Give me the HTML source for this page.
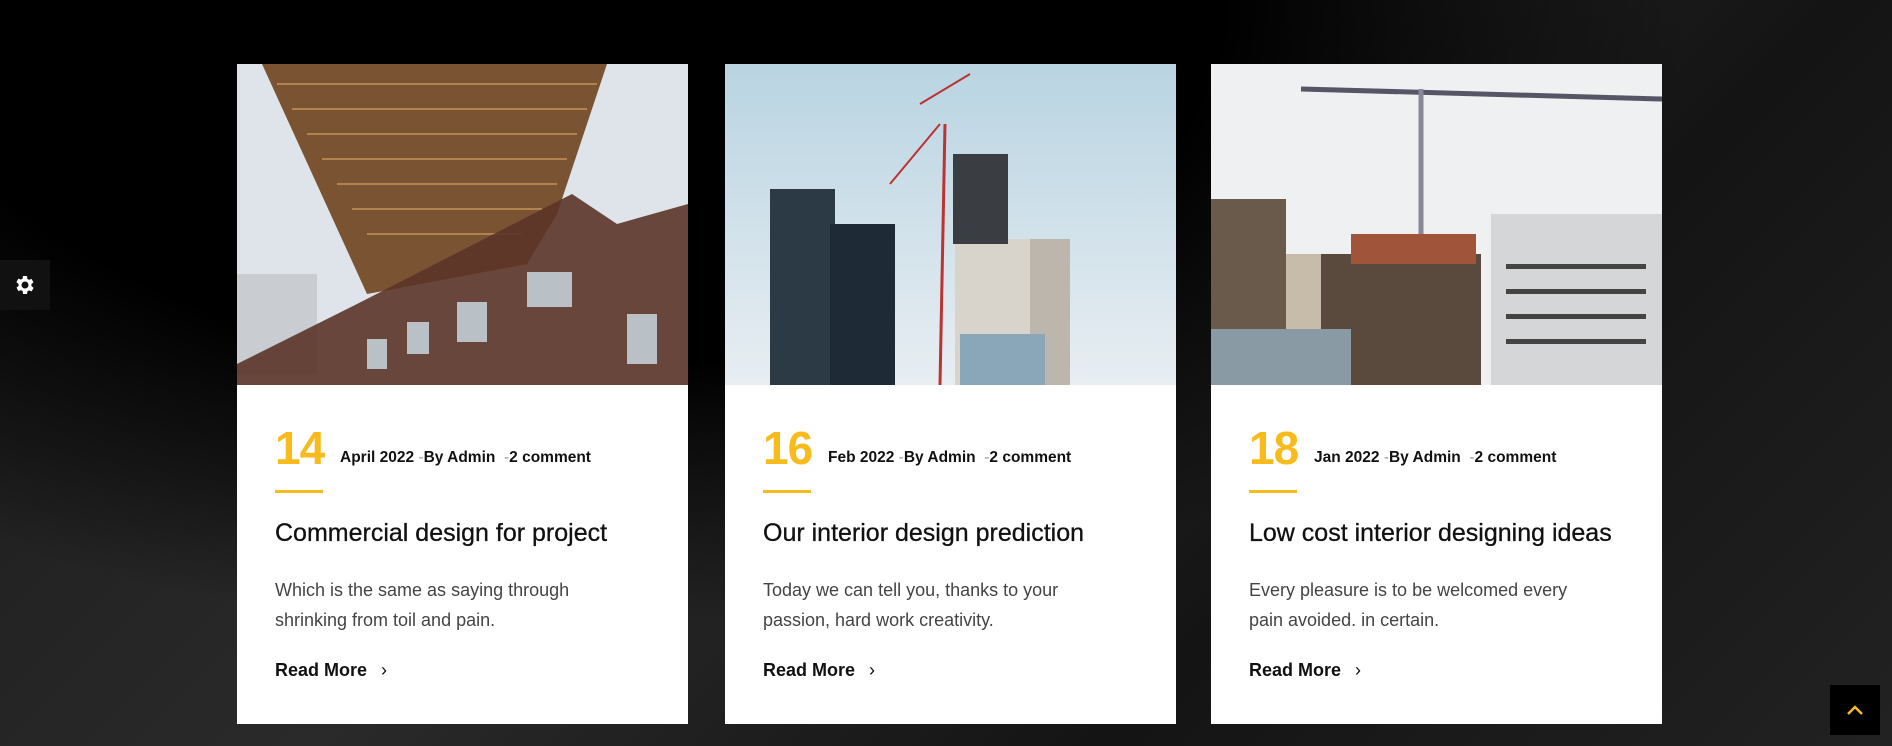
<!DOCTYPE html>
<html><head><meta charset="utf-8"><style>
*{margin:0;padding:0;box-sizing:border-box}
body{width:1892px;height:746px;overflow:hidden;position:relative;font-family:"Liberation Sans",sans-serif;
background:radial-gradient(ellipse at 30% 0%,#000 0 35%,transparent 60%),linear-gradient(135deg,#1a1a1a 0%,#2a2a2a 40%,#141414 70%,#222 100%);}
.bgtop{position:absolute;left:0;top:0;width:820px;height:200px;background:#000}
.card{position:absolute;top:64px;width:451px;height:660px;background:#fff}
.img{height:321px;overflow:hidden}
.img svg{display:block}
.body{padding:0 0 0 38px;position:relative}
.num{position:absolute;left:38px;top:36px;font-size:46px;font-weight:bold;color:#f8bb1e;letter-spacing:-1px}
.meta{position:absolute;left:103px;top:64px;font-size:15.5px;font-weight:bold;color:#111;white-space:nowrap}
.meta span{color:#999;font-weight:normal}
.bar{position:absolute;left:38px;top:105px;width:48px;height:3px;background:#f8bb1e}
.title{position:absolute;left:38px;top:134px;font-size:25px;color:#111;white-space:nowrap;-webkit-text-stroke:.3px #111}
.para{position:absolute;left:38px;top:190px;font-size:18px;line-height:30px;color:#444;width:335px}
.more{position:absolute;left:38px;top:275px;font-size:18px;font-weight:bold;color:#111}
.more b{display:inline-block;margin-left:14px;font-weight:normal}
</style></head><body>
<div class="bgtop"></div>
<div style="position:absolute;left:0;top:260px;width:50px;height:50px;background:#111;display:flex;align-items:center;justify-content:center">
<svg width="24" height="24" viewBox="0 0 24 24"><path fill="#fff" d="M19.4 13a7.5 7.5 0 0 0 0-2l2.1-1.6-2-3.5-2.5 1a7.6 7.6 0 0 0-1.7-1L15 3h-4l-.4 2.6a7.6 7.6 0 0 0-1.7 1l-2.5-1-2 3.5L6.6 11a7.5 7.5 0 0 0 0 2l-2.1 1.6 2 3.5 2.5-1a7.6 7.6 0 0 0 1.7 1L11 21h4l.4-2.6a7.6 7.6 0 0 0 1.7-1l2.5 1 2-3.5zM13 15.5a3.5 3.5 0 1 1 0-7 3.5 3.5 0 0 1 0 7z" transform="translate(-1 0)"/></svg></div>
<div style="position:absolute;left:1830px;top:685px;width:50px;height:50px;background:#000;display:flex;align-items:center;justify-content:center">
<svg width="20" height="12" viewBox="0 0 20 12"><path d="M3 10l7-7 7 7" stroke="#f8bb1e" stroke-width="2.5" fill="none"/></svg></div>

<div class="card" style="left:237px">
<div class="img"><svg width="451" height="321">
<rect width="451" height="321" fill="#dfe4ea"/>
<polygon points="25,0 370,0 320,150 290,200 130,230" fill="#7a5432"/>
<g stroke="#b08350" stroke-width="2"><line x1="40" y1="20" x2="360" y2="20"/><line x1="55" y1="45" x2="350" y2="45"/><line x1="70" y1="70" x2="340" y2="70"/><line x1="85" y1="95" x2="330" y2="95"/><line x1="100" y1="120" x2="320" y2="120"/><line x1="115" y1="145" x2="305" y2="145"/><line x1="130" y1="170" x2="285" y2="170"/></g>
<rect x="0" y="210" width="80" height="100" fill="#c9cdd2"/>
<polygon points="0,300 120,240 335,130 380,160 451,140 451,321 0,321" fill="#5b3428" opacity=".9"/>
<g fill="#b9c0c6"><rect x="290" y="208" width="45" height="35"/><rect x="220" y="238" width="30" height="40"/><rect x="170" y="258" width="22" height="32"/><rect x="130" y="275" width="20" height="30"/><rect x="390" y="250" width="30" height="50"/></g>
</svg></div>
<div class="body">
<div class="num">14</div><div class="meta">April 2022 <span>-</span>By Admin &nbsp;<span>-</span>2 comment</div>
<div class="bar"></div><div class="title">Commercial design for project</div>
<div class="para">Which is the same as saying through shrinking from toil and pain.</div>
<div class="more">Read More<b>›</b></div></div></div>

<div class="card" style="left:725px">
<div class="img"><svg width="451" height="321">
<defs><linearGradient id="s2" x1="0" y1="0" x2="0" y2="1"><stop offset="0" stop-color="#b9d4e2"/><stop offset="1" stop-color="#e8eef2"/></linearGradient></defs>
<rect width="451" height="321" fill="url(#s2)"/>
<rect x="45" y="125" width="65" height="196" fill="#2c3a45"/><rect x="105" y="160" width="65" height="161" fill="#1e2a35"/>
<rect x="230" y="175" width="80" height="146" fill="#d8d4cc"/><rect x="228" y="90" width="55" height="90" fill="#3a3d42"/>
<rect x="305" y="175" width="40" height="146" fill="#bcb6ad"/><rect x="235" y="270" width="85" height="51" fill="#8aa6b9"/>
<line x1="220" y1="60" x2="215" y2="321" stroke="#b33" stroke-width="3"/><line x1="165" y1="120" x2="215" y2="60" stroke="#b33" stroke-width="2"/>
<line x1="195" y1="40" x2="245" y2="10" stroke="#b33" stroke-width="2"/>
</svg></div>
<div class="body">
<div class="num">16</div><div class="meta">Feb 2022 <span>-</span>By Admin &nbsp;<span>-</span>2 comment</div>
<div class="bar"></div><div class="title">Our interior design prediction</div>
<div class="para">Today we can tell you, thanks to your passion, hard work creativity.</div>
<div class="more">Read More<b>›</b></div></div></div>

<div class="card" style="left:1211px">
<div class="img"><svg width="451" height="321">
<rect width="451" height="321" fill="#eef0f2"/>
<line x1="90" y1="25" x2="451" y2="35" stroke="#556" stroke-width="5"/><line x1="210" y1="25" x2="210" y2="200" stroke="#889" stroke-width="5"/>
<rect x="0" y="135" width="75" height="186" fill="#6a5a4c"/><rect x="75" y="190" width="50" height="131" fill="#c7bba9"/>
<rect x="110" y="190" width="160" height="131" fill="#5a4a3e"/><rect x="140" y="170" width="125" height="30" fill="#a0553a"/>
<rect x="280" y="150" width="171" height="171" fill="#d4d6d8"/><rect x="0" y="265" width="140" height="56" fill="#8a9aa5"/>
<g fill="#444"><rect x="295" y="200" width="140" height="5"/><rect x="295" y="225" width="140" height="5"/><rect x="295" y="250" width="140" height="5"/><rect x="295" y="275" width="140" height="5"/></g>
</svg></div>
<div class="body">
<div class="num">18</div><div class="meta">Jan 2022 <span>-</span>By Admin &nbsp;<span>-</span>2 comment</div>
<div class="bar"></div><div class="title">Low cost interior designing ideas</div>
<div class="para">Every pleasure is to be welcomed every pain avoided. in certain.</div>
<div class="more">Read More<b>›</b></div></div></div>
</body></html>
